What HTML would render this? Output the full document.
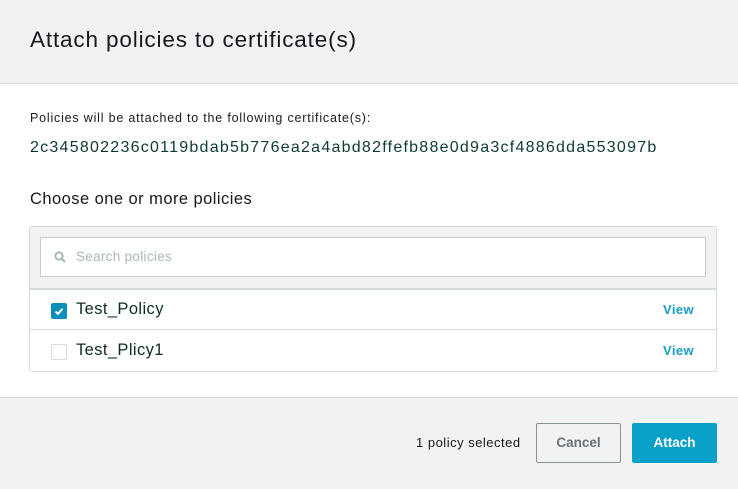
<html><head><style>
body{margin:0;width:738px;height:488px;font-family:"Liberation Sans",sans-serif;color:#16191f;position:relative;overflow:hidden;background:#fff}
.a{position:absolute}
</style></head><body>
<div class="a" style="left:0;top:0;width:738px;height:83px;background:#f2f2f2;border-bottom:1px solid #d5dbdb"></div>
<div class="a" style="left:30px;top:27px;font-size:22.5px;letter-spacing:0.85px;color:#16191f">Attach policies to certificate(s)</div>
<div class="a" style="left:30px;top:111px;font-size:12.5px;letter-spacing:0.8px;color:#16191f">Policies will be attached to the following certificate(s):</div>
<div class="a" style="left:30px;top:139px;font-size:16px;letter-spacing:1.25px;color:#0d3a32">2c345802236c0119bdab5b776ea2a4abd82ffefb88e0d9a3cf4886dda553097b</div>
<div class="a" style="left:30px;top:190px;font-size:16.5px;letter-spacing:0.45px;color:#16191f">Choose one or more policies</div>
<div class="a" style="left:29px;top:226px;width:686px;height:144px;border:1px solid #d5dbdb;border-radius:3px;overflow:hidden">
 <div class="a" style="left:0;top:0;width:686px;height:61px;background:#f2f2f2;border-bottom:2px solid #d5dbdb"></div>
 <div class="a" style="left:10px;top:10px;width:664px;height:38px;background:#fff;border:1px solid #c6cccc"></div>
 <svg class="a" style="left:24px;top:24px" width="12" height="12" viewBox="0 0 12 12"><circle cx="5" cy="5" r="3.6" fill="none" stroke="#aab7b8" stroke-width="2"/><path d="M7.5 7.5L11 11" stroke="#aab7b8" stroke-width="2.2"/></svg>
 <div class="a" style="left:46px;top:22px;font-size:13.5px;letter-spacing:0.3px;color:#aab7b8">Search policies</div>
 <div class="a" style="left:0;top:102px;width:686px;height:1px;background:#d5dbdb"></div>
 <div class="a" style="left:21px;top:76px;width:16px;height:16px;background:#0a8fba;border-radius:2px"></div>
 <svg class="a" style="left:21px;top:76px" width="16" height="16"><path d="M4.5 8.5l2.5 2.3 4.5-5" stroke="#fff" stroke-width="2" fill="none"/></svg>
 <div class="a" style="left:46px;top:73px;font-size:16.5px;letter-spacing:0.4px;color:#0d2a25">Test_Policy</div>
 <div class="a" style="left:633px;top:75px;font-size:13px;letter-spacing:0.4px;font-weight:bold;color:#1a9cc4">View</div>
 <div class="a" style="left:21px;top:117px;width:14px;height:14px;border:1px solid #d5dbdb;border-radius:2px;background:#fff"></div>
 <div class="a" style="left:46px;top:114px;font-size:16.5px;letter-spacing:0.4px;color:#0d2a25">Test_Plicy1</div>
 <div class="a" style="left:633px;top:116px;font-size:13px;letter-spacing:0.4px;font-weight:bold;color:#1a9cc4">View</div>
</div>
<div class="a" style="left:0;top:397px;width:738px;height:91px;background:#f2f2f2;border-top:1px solid #d5dbdb"></div>
<div class="a" style="left:416px;top:435px;font-size:13px;letter-spacing:0.5px;color:#16191f">1 policy selected</div>
<div class="a" style="left:536px;top:423px;width:83px;height:38px;border:1px solid #879596;border-radius:2px;background:#f2f2f2;text-align:center;line-height:38px;font-size:13.5px;font-weight:bold;color:#687078">Cancel</div>
<div class="a" style="left:632px;top:423px;width:85px;height:40px;background:#0aa0c8;border-radius:2px;text-align:center;line-height:40px;font-size:13.5px;font-weight:bold;color:#fff">Attach</div>
</body></html>
